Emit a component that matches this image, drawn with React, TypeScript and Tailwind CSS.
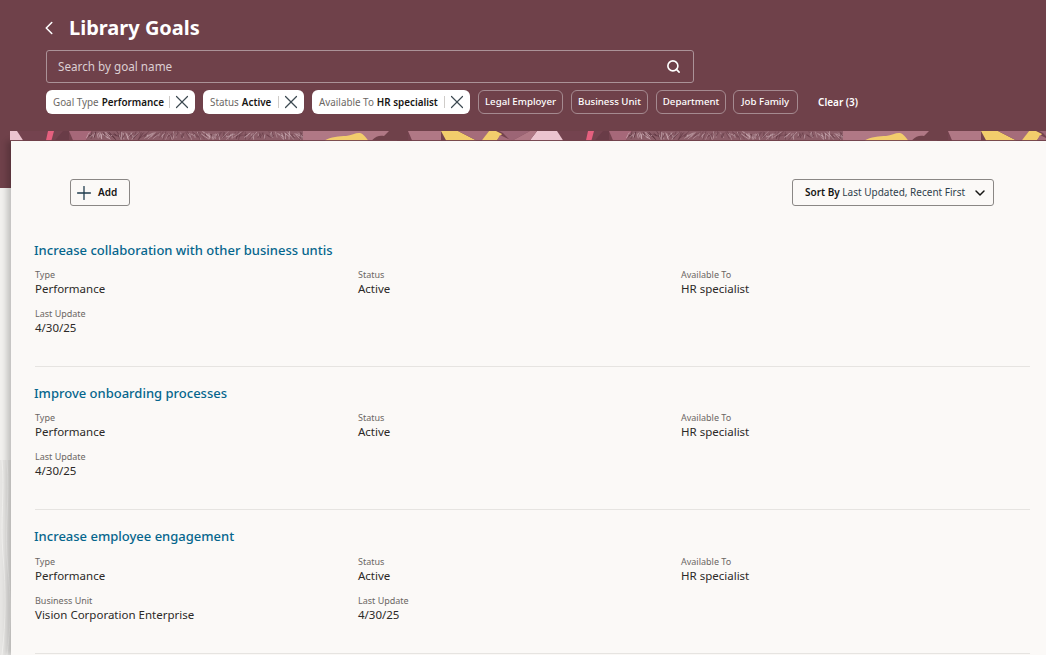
import { ChevronDown, ChevronLeft, Plus, Search, X } from "lucide-react";

const font = "font-['Noto_Sans','Open_Sans',sans-serif]";

function textureLines(from: number, to: number) {
  const out: { d: string; c: string; w: number }[] = [];
  let seed = 17;
  const rnd = () => {
    seed = (seed * 9301 + 49297) % 233280;
    return seed / 233280;
  };
  for (let x = from; x < to; x += 1.3) {
    const lean = (rnd() - 0.5) * 9 + Math.sin(x / 14) * 4;
    const y1 = rnd() * 4;
    const y2 = 5 + rnd() * 4;
    const light = rnd() > 0.45;
    out.push({
      d: `M${x.toFixed(1)} ${y1.toFixed(1)}L${(x + lean).toFixed(1)} ${y2.toFixed(1)}`,
      c: light ? "#d8bcc3" : "#5f3641",
      w: 0.5 + rnd() * 0.4,
    });
  }
  return out;
}

const lines = textureLines(88, 303);

function Strip() {
  return (
    <svg className="block h-[10px] w-full" viewBox="10 0 1036 10" preserveAspectRatio="none">
      <rect x="10" width="1036" height="10" fill="#6f414a" />
      {[-540, 0, 540].map((o) => (
        <g key={o} transform={`translate(${o} 0)`}>
          <rect x="23" y="0" width="540" height="9.3" fill="#74434f" />
          <path d="M48 0H54L51.5 9.3H46Z" fill="#e5607f" />
          <path d="M63 0H69V9.3H55Z" fill="#693c47" />
          <path d="M69 0H92L86 9.3H73Z" fill="#a66879" />
          <path d="M92 0H303V9.3H86Z" fill="#8b5d68" />
          {lines.map((l, i) => (
            <path key={i} d={l.d} stroke={l.c} strokeWidth={l.w} opacity={i < 30 ? 0.95 : 0.65} />
          ))}
          <rect x="303" y="0" width="94" height="9.3" fill="#b07885" />
          <path d="M325 9.3C330 6 340 5 346 5C352 4 356 1.5 360 2C364 3 366 7 368 9.3Z" fill="#f2cd6c" />
          <path d="M372 9.3C376 5 380 4 384 5L389 0H397V9.3Z" fill="#6f414a" />
          <rect x="397" y="0" width="11" height="9.3" fill="#6f414a" />
          <path d="M408 0H441V9.3H412Z" fill="#b07885" />
          <path d="M441 0H458L476 9.3H446Z" fill="#f2cd6c" />
          <path d="M458 0H489L483 9.3H476Z" fill="#a56c7a" />
          <path d="M489 0H496L502 3L497 9.3H482Z" fill="#f2cd6c" />
          <path d="M499 0H530L513 9.3H510L503 2Z" fill="#9c6575" />
          <path d="M497 9.3L500 4L511 9.3Z" fill="#a56c7a" />
          <path d="M537 0H557L563 9.3H530Z" fill="#ecc4cf" />
          <path d="M513 9.3L530 0H537L530 9.3Z" fill="#b07885" />
        </g>
      ))}
      <rect x="10" y="9.3" width="1036" height="0.7" fill="#6f414a" />
    </svg>
  );
}

function Chip({ label, value, width }: { label: string; value: string; width: string }) {
  return (
    <div className={`flex h-6 items-center rounded-md bg-white pl-[7px] pr-[2px] text-[9.85px] ${width}`}>
      <span className="text-[#6b6764]">{label}</span>
      <span className="ml-[3px] font-semibold text-[#161513]">{value}</span>
      <span className="ml-auto h-[12px] w-px bg-[#cfccc9]" />
      <X className="ml-px h-[22px] w-[22px] text-[#3d4a52]" strokeWidth={1.3} />
    </div>
  );
}

function Filter({ label, width }: { label: string; width: string }) {
  return (
    <div className={`flex h-6 items-center justify-center rounded-md border border-[#a58a90] text-[9.7px] font-medium text-white ${width}`}>
      {label}
    </div>
  );
}

function Field({ label, value }: { label: string; value: string }) {
  return (
    <div>
      <div className="text-[9px] leading-[12px] text-[#6b6764]">{label}</div>
      <div className="text-[11.5px] leading-[15px] text-[#2b2927]">{value}</div>
    </div>
  );
}

function Goal({
  title,
  rows,
  last,
}: {
  title: string;
  rows: [string, string][];
  last?: boolean;
}) {
  return (
    <section className={`border-b border-[#e6e4e1] ${last ? "h-[128px]" : "mb-[16px] h-[127px]"}`}>
      <h2 className="-ml-px text-[13px] font-medium leading-[20px] text-[#05668d]">{title}</h2>
      <div className={`${last ? "mt-[10px]" : "mt-[9px]"} grid grid-cols-[323px_323px_1fr] gap-y-[12px]`}>
        {rows.map(([l, v]) => (
          <Field key={l} label={l} value={v} />
        ))}
      </div>
    </section>
  );
}

export default function App() {
  return (
    <div className={`relative h-[655px] w-[1046px] overflow-hidden bg-[#f1f0ee] ${font}`}>
      <div className="absolute inset-x-0 top-0 h-[188px] bg-[#6f414a]" />
      <svg className="absolute bottom-0 left-0 h-[195px] w-[11px]" viewBox="0 0 11 195" fill="none">
        <rect width="11" height="195" fill="#e6e5e3" />
        <path d="M2 0C5 30 0 60 3 95S6 160 2 195M7 0C10 40 4 70 8 110S10 170 7 195" stroke="#f2f1ef" strokeWidth="1" />
      </svg>
      <div className="relative">
        <header className="h-[131px] pl-[46px]">
          <div className="flex h-[50px] items-center pt-[5px]">
            <ChevronLeft className="ml-[-8px] h-[22px] w-[22px] text-white" strokeWidth={1.7} />
            <h1 className="ml-[9px] text-[20px] font-bold text-white">Library Goals</h1>
          </div>
          <div className="flex h-[33px] w-[648px] items-center justify-between rounded-[3px] border border-[#ab9298] pl-[11px] pr-[12px]">
            <span className="text-[11.7px] text-[#dccfd2]">Search by goal name</span>
            <Search className="h-[15px] w-[15px] text-white" strokeWidth={2.6} />
          </div>
          <div className="mt-[7px] flex items-center">
            <Chip label="Goal Type" value="Performance" width="w-[149px]" />
            <div className="ml-2">
              <Chip label="Status" value="Active" width="w-[101px]" />
            </div>
            <div className="ml-2">
              <Chip label="Available To" value="HR specialist" width="w-[158px]" />
            </div>
            <div className="ml-2">
              <Filter label="Legal Employer" width="w-[85px]" />
            </div>
            <div className="ml-2">
              <Filter label="Business Unit" width="w-[77px]" />
            </div>
            <div className="ml-2">
              <Filter label="Department" width="w-[70px]" />
            </div>
            <div className="ml-[7px]">
              <Filter label="Job Family" width="w-[65px]" />
            </div>
            <span className="ml-[20px] text-[10px] font-semibold text-white">Clear (3)</span>
          </div>
        </header>
        <div className="ml-[10px]">
          <Strip />
        </div>
        <main className="ml-[11px] h-[514px] bg-[#fbf9f7] pl-[24px] pr-[16px] shadow-[-4px_0_6px_rgba(0,0,0,0.2)]">
          <div className="flex items-center justify-between pl-[35px] pr-[36px] pt-[38px]">
            <button className="flex h-[27px] w-[60px] items-center gap-[3px] rounded-[3px] border border-[#8a8785] pl-[2px] text-[10px] font-semibold text-[#161513]">
              <Plus className="h-[22px] w-[22px] text-[#1f3b4d]" strokeWidth={1.4} />
              Add
            </button>
            <button className="flex h-[27px] w-[202px] items-center justify-between rounded-[3px] border border-[#8a8785] pl-[12px] pr-[5px] text-[10px] text-[#2f3f4c]">
              <span>
                <span className="font-semibold text-[#161513]">Sort By</span> Last Updated, Recent First
              </span>
              <ChevronDown className="h-4 w-4 text-[#161513]" strokeWidth={2.2} />
            </button>
          </div>
          <div className="mt-[34px]">
            <Goal
              title="Increase collaboration with other business untis"
              rows={[
                ["Type", "Performance"],
                ["Status", "Active"],
                ["Available To", "HR specialist"],
                ["Last Update", "4/30/25"],
              ]}
            />
            <Goal
              title="Improve onboarding processes"
              rows={[
                ["Type", "Performance"],
                ["Status", "Active"],
                ["Available To", "HR specialist"],
                ["Last Update", "4/30/25"],
              ]}
            />
            <Goal
              last
              title="Increase employee engagement"
              rows={[
                ["Type", "Performance"],
                ["Status", "Active"],
                ["Available To", "HR specialist"],
                ["Business Unit", "Vision Corporation Enterprise"],
                ["Last Update", "4/30/25"],
              ]}
            />
          </div>
        </main>
      </div>
    </div>
  );
}
